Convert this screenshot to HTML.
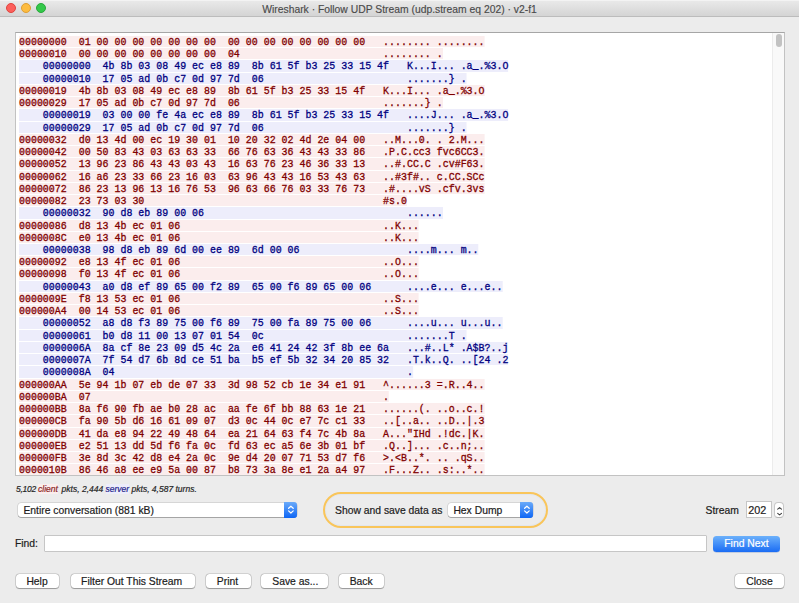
<!DOCTYPE html>
<html><head><meta charset="utf-8">
<style>
*{box-sizing:border-box;margin:0;padding:0}
html,body{width:799px;height:603px;overflow:hidden;background:#ececec;font-family:"Liberation Sans",sans-serif;color:#1a1a1a}
#titlebar{position:absolute;left:0;top:0;width:799px;height:17px;background:linear-gradient(#e9e9e9,#d4d4d4);border-bottom:1px solid #bcbcbc;border-top:1px solid #f3f3f3}
.tl{position:absolute;top:2.45px;width:10px;height:10px;border-radius:50%}
#title{position:absolute;left:0;top:2.6px;width:799px;text-align:center;font-size:10.35px;color:#4a4a4a;-webkit-text-stroke:0.15px currentColor}
#ta{position:absolute;left:15px;top:32px;width:770px;height:444px;background:#fff;border:1px solid #c2c2c2;border-top-color:#a6a6a6;overflow:hidden}
#txt{position:absolute;left:3px;top:3px;font-family:"Liberation Mono",monospace;font-size:11px;transform:scaleX(0.9041);transform-origin:0 0}
#txt div{height:12.24px}
#txt span{display:inline-block;height:11.25px;line-height:12.3px;white-space:pre;vertical-align:top;-webkit-text-stroke:0.3px currentColor}
#txt .c span{background:#fbeded;color:#7f0000}
#txt .s span{background:#ededfb;color:#00007f}
#sb{position:absolute;right:0;top:0;width:12.3px;height:442px;background:#f9f9f9;border-left:1px solid #ececec}
#thumb{position:absolute;left:3.3px;top:1px;width:6px;height:13px;border-radius:3px;background:#c2c2c2}
.ui{position:absolute;font-size:10.35px;white-space:nowrap;color:#1c1c1c;-webkit-text-stroke:0.2px currentColor}
.box{position:absolute;background:#fff;border-radius:3px;box-shadow:0 0 0 0.5px rgba(0,0,0,.18),0 0.7px 0.6px rgba(0,0,0,.3)}
.step{position:absolute;top:-0.4px;height:15.2px;background:linear-gradient(#6aaaf9,#0e66f5);border-radius:0 3px 3px 0}
.bb{position:absolute}
.wb{top:573.8px;height:14.5px;background:#fff;border-radius:3.5px;box-shadow:0 0 0 0.6px rgba(0,0,0,.2),0 0.7px 0.7px rgba(0,0,0,.28)}
</style></head><body>
<div id="titlebar">
<div class="tl" style="left:6px;background:#fc605c;border:0.5px solid #e0443e"></div>
<div class="tl" style="left:21px;background:#fdbc40;border:0.5px solid #de9e34"></div>
<div class="tl" style="left:36px;background:#34c84a;border:0.5px solid #27a83a"></div>
<div id="title">Wireshark · Follow UDP Stream (udp.stream eq 202) · v2-f1</div>
</div>
<div id="ta"><div id="txt">
<div class="c"><span>00000000  01 00 00 00 00 00 00 00  00 00 00 00 00 00 00 00   ........ ........</span></div>
<div class="c"><span>00000010  00 00 00 00 00 00 00 00  04                        ........ .</span></div>
<div class="s"><span>    00000000  4b 8b 03 08 49 ec e8 89  8b 61 5f b3 25 33 15 4f   K...I... .a_.%3.O</span></div>
<div class="s"><span>    00000010  17 05 ad 0b c7 0d 97 7d  06                        .......} .</span></div>
<div class="c"><span>00000019  4b 8b 03 08 49 ec e8 89  8b 61 5f b3 25 33 15 4f   K...I... .a_.%3.O</span></div>
<div class="c"><span>00000029  17 05 ad 0b c7 0d 97 7d  06                        .......} .</span></div>
<div class="s"><span>    00000019  03 00 00 fe 4a ec e8 89  8b 61 5f b3 25 33 15 4f   ....J... .a_.%3.O</span></div>
<div class="s"><span>    00000029  17 05 ad 0b c7 0d 97 7d  06                        .......} .</span></div>
<div class="c"><span>00000032  d0 13 4d 00 ec 19 30 01  10 20 32 02 4d 2e 04 00   ..M...0. . 2.M...</span></div>
<div class="c"><span>00000042  00 50 83 43 03 63 63 33  66 76 63 36 43 43 33 86   .P.C.cc3 fvc6CC3.</span></div>
<div class="c"><span>00000052  13 96 23 86 43 43 03 43  16 63 76 23 46 36 33 13   ..#.CC.C .cv#F63.</span></div>
<div class="c"><span>00000062  16 a6 23 33 66 23 16 03  63 96 43 43 16 53 43 63   ..#3f#.. c.CC.SCc</span></div>
<div class="c"><span>00000072  86 23 13 96 13 16 76 53  96 63 66 76 03 33 76 73   .#....vS .cfv.3vs</span></div>
<div class="c"><span>00000082  23 73 03 30                                        #s.0</span></div>
<div class="s"><span>    00000032  90 d8 eb 89 00 06                                  ......</span></div>
<div class="c"><span>00000086  d8 13 4b ec 01 06                                  ..K...</span></div>
<div class="c"><span>0000008C  e0 13 4b ec 01 06                                  ..K...</span></div>
<div class="s"><span>    00000038  98 d8 eb 89 6d 00 ee 89  6d 00 06                  ....m... m..</span></div>
<div class="c"><span>00000092  e8 13 4f ec 01 06                                  ..O...</span></div>
<div class="c"><span>00000098  f0 13 4f ec 01 06                                  ..O...</span></div>
<div class="s"><span>    00000043  a0 d8 ef 89 65 00 f2 89  65 00 f6 89 65 00 06      ....e... e...e..</span></div>
<div class="c"><span>0000009E  f8 13 53 ec 01 06                                  ..S...</span></div>
<div class="c"><span>000000A4  00 14 53 ec 01 06                                  ..S...</span></div>
<div class="s"><span>    00000052  a8 d8 f3 89 75 00 f6 89  75 00 fa 89 75 00 06      ....u... u...u..</span></div>
<div class="s"><span>    00000061  b0 d8 11 00 13 07 01 54  0c                        .......T .</span></div>
<div class="s"><span>    0000006A  8a cf 8e 23 09 d5 4c 2a  e6 41 24 42 3f 8b ee 6a   ...#..L* .A$B?..j</span></div>
<div class="s"><span>    0000007A  7f 54 d7 6b 8d ce 51 ba  b5 ef 5b 32 34 20 85 32   .T.k..Q. ..[24 .2</span></div>
<div class="s"><span>    0000008A  04                                                 .</span></div>
<div class="c"><span>000000AA  5e 94 1b 07 eb de 07 33  3d 98 52 cb 1e 34 e1 91   ^......3 =.R..4..</span></div>
<div class="c"><span>000000BA  07                                                 .</span></div>
<div class="c"><span>000000BB  8a f6 90 fb ae b0 28 ac  aa fe 6f bb 88 63 1e 21   ......(. ..o..c.!</span></div>
<div class="c"><span>000000CB  fa 90 5b d6 16 61 09 07  d3 0c 44 0c e7 7c c1 33   ..[..a.. ..D..|.3</span></div>
<div class="c"><span>000000DB  41 da e8 94 22 49 48 64  ea 21 64 63 f4 7c 4b 8a   A...&quot;IHd .!dc.|K.</span></div>
<div class="c"><span>000000EB  e2 51 13 dd 5d f6 fa 0c  fd 63 ec a5 6e 3b 01 bf   .Q..]... .c..n;..</span></div>
<div class="c"><span>000000FB  3e 8d 3c 42 d8 e4 2a 0c  9e d4 20 07 71 53 d7 f6   &gt;.&lt;B..*. .. .qS..</span></div>
<div class="c"><span>0000010B  86 46 a8 ee e9 5a 00 87  b8 73 3a 8e e1 2a a4 97   .F...Z.. .s:..*..</span></div>
</div><div id="sb"><div id="thumb"></div></div></div>
<div class="ui st" style="left:16px;top:483.6px;font-style:italic;font-size:8.5px;color:#262626"><span style="letter-spacing:-0.25px">5,102</span> <span style="color:#8a1f1f;background:#fbeded;margin-left:-0.4px;margin-right:1.4px">client</span> pkts, 2,444 <span style="color:#1f1f8a;background:#ededfb">server</span> pkts, 4,587 turns.</div>
<div class="box" style="left:17.6px;top:502.8px;width:279.8px;height:14.4px"><div class="step" style="left:266.2px;width:13.6px"><svg width="14" height="15" viewBox="0 0 14 15" style="position:absolute;left:0;top:0"><path d="M4.6 6.3 L6.9 4.2 L9.2 6.3 M4.6 8.9 L6.9 11 L9.2 8.9" fill="none" stroke="#fff" stroke-width="1.2" stroke-linecap="round" stroke-linejoin="round"/></svg></div></div>
<div class="ui" style="left:23.4px;top:505.1px">Entire conversation (881 kB)</div>
<div id="grp" style="position:absolute;left:323px;top:492px;width:225px;height:36px;border:2px solid #f9c55a;border-radius:18px;box-shadow:inset 0 0 0 1px rgba(215,225,240,.45)"></div>
<div class="ui" style="left:335px;top:504.6px">Show and save data as</div>
<div class="box" style="left:448px;top:502.8px;width:85px;height:14.4px"><div class="step" style="left:72.2px;width:12.8px"><svg width="14" height="15" viewBox="0 0 14 15" style="position:absolute;left:0;top:0"><path d="M4.6 6.3 L6.9 4.2 L9.2 6.3 M4.6 8.9 L6.9 11 L9.2 8.9" fill="none" stroke="#fff" stroke-width="1.2" stroke-linecap="round" stroke-linejoin="round"/></svg></div></div>
<div class="ui" style="left:453.4px;top:505px">Hex Dump</div>
<div class="ui" style="left:705.6px;top:504.9px">Stream</div>
<div style="position:absolute;left:746px;top:501px;width:26px;height:17px;background:#fff;border:1px solid #c6c6c6"></div>
<div class="ui" style="left:748.3px;top:504.2px;font-size:10.8px">202</div>
<div style="position:absolute;left:774.4px;top:502.3px;width:9.2px;height:16px;background:#fff;border-radius:4px;border:0.8px solid #c8c8c8;border-bottom-color:#b4b4b4"><svg width="9" height="16" viewBox="0 0 9 16" style="position:absolute;left:-0.8px;top:-0.8px"><path d="M2.7 6.2 L4.6 4.6 L6.5 6.2 M2.7 10.3 L4.6 11.9 L6.5 10.3" fill="none" stroke="#3c3c3c" stroke-width="1.05" stroke-linecap="round" stroke-linejoin="round"/></svg></div>
<div class="ui" style="left:15px;top:537.5px">Find:</div>
<div style="position:absolute;left:44px;top:535px;width:663px;height:17px;background:#fff;border:1px solid #c6c6c6;border-radius:1px"></div>
<div class="bb" style="left:712.8px;top:535.5px;width:67px;height:16.3px;background:linear-gradient(#6cb1fb,#1a6cf4);border-radius:3.5px;box-shadow:0 0.5px 0.5px rgba(0,60,160,.35)"></div>
<div class="ui" style="left:724.3px;top:537.6px;color:#fff">Find Next</div>
<div class="bb wb" style="left:15.6px;width:43.6px"></div><div class="ui" style="left:26.4px;top:575.5px">Help</div>
<div class="bb wb" style="left:70.9px;width:123.8px"></div><div class="ui" style="left:81.1px;top:575.5px">Filter Out This Stream</div>
<div class="bb wb" style="left:205.5px;width:45px"></div><div class="ui" style="left:216.8px;top:575.5px">Print</div>
<div class="bb wb" style="left:261.2px;width:66.8px"></div><div class="ui" style="left:272.3px;top:575.5px">Save as...</div>
<div class="bb wb" style="left:339.2px;width:45px"></div><div class="ui" style="left:349.7px;top:575.5px">Back</div>
<div class="bb wb" style="left:735.3px;width:49px"></div><div class="ui" style="left:746.2px;top:575.5px">Close</div>
</body></html>
